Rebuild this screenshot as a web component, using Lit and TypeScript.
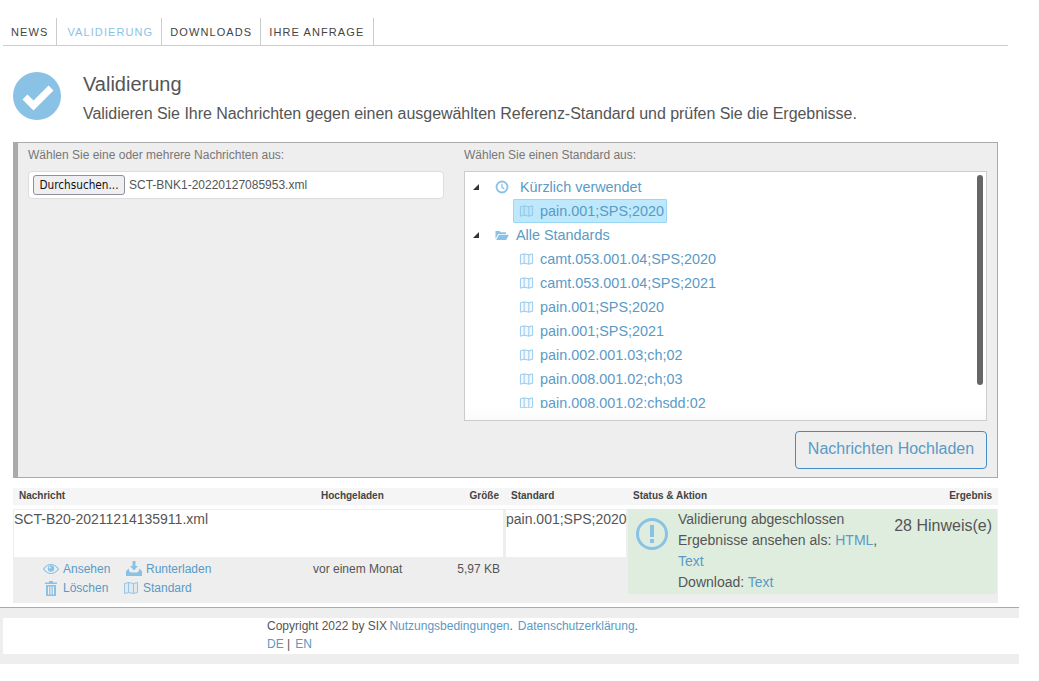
import { LitElement, html, css, svg } from 'lit';
import { customElement } from 'lit/decorators.js';

const mapIcon = svg`<path d="M1.500 2.500 5.500 1.500 10.500 2.500 14.500 1.500V11.500L10.500 12.500 5.500 11.500 1.500 12.500Z M5.500 1.500V11.500 M10.500 2.500V12.500" fill="currentColor" fill-opacity="0.12" stroke="currentColor" stroke-width="0.9"/>`;
const standards = [
  'camt.053.001.04;SPS;2020',
  'camt.053.001.04;SPS;2021',
  'pain.001;SPS;2020',
  'pain.001;SPS;2021',
  'pain.002.001.03;ch;02',
  'pain.008.001.02;ch;03',
  'pain.008.001.02:chsdd:02',
];

@customElement('app-root')
export class AppRoot extends LitElement {
  static styles = css`
    :host {
      display: block;
      font-family: 'Liberation Sans', Arial, sans-serif;
      color: #555;
      background: #fff;
      height: 681px;
      overflow: hidden;
    }
    a { color: #5a9ac5; text-decoration: none; }
    .nav {
      display: flex;
      margin: 0 0 0 3px;
      padding-top: 18px;
      width: 1005px;
      height: 27px;
      border-bottom: 1px solid #ccc;
      box-sizing: content-box;
    }
    .nav a {
      display: flex;
      align-items: center;
      padding: 0 8px;
      font-size: 11px;
      letter-spacing: 1.1px;
      color: #444;
      border-right: 1px solid #ccc;
      height: 27px;
    }
    .nav a.active { color: #8ac2e6; padding-left: 10px; }
    .nav a:last-child { padding-right: 9px; }
    .head {
      display: flex;
      margin: 26px 0 0 13px;
      height: 70px;
    }
    .badge { width: 48px; height: 48px; flex: none; }
    .head-text { margin-left: 22px; }
    h1 { margin: 0; font-size: 20px; font-weight: 400; line-height: 25px; }
    .head p { margin: 6px 0 0; font-size: 16px; line-height: 22px; letter-spacing: -0.04px; }
    .panel {
      margin-left: 13px;
      width: 985px;
      height: 336px;
      box-sizing: border-box;
      background: #eee;
      border: 1px solid #aaa;
      border-left-width: 5px;
      display: grid;
      grid-template-columns: 416px 523px;
      align-content: start;
      column-gap: 20px;
      padding: 5px 10px 0 10px;
      font-size: 12px;
      color: #777;
    }
    .label { line-height: 14px; margin: 0 0 9px; }
    .file {
      height: 28px;
      box-sizing: border-box;
      background: #fff;
      border: 1px solid #ddd;
      border-radius: 4px;
      display: flex;
      align-items: center;
      padding-left: 4px;
      color: #555;
    }
    .file span.btn {
      font-size: 11.7px;
      color: #111;
      font-family: 'DejaVu Sans Condensed', 'DejaVu Sans', sans-serif;
      background: #efeff2;
      border: 1px solid #8f8f9d;
      border-radius: 3px;
      height: 20px;
      line-height: 18px;
      width: 92px;
      box-sizing: border-box;
      text-align: center;
      margin-right: 4px;
    }
    .tree {
      position: relative;
      height: 250px;
      box-sizing: border-box;
      background: #fff;
      border: 1px solid #ccc;
      padding: 3px 0 12px;
      font-size: 14.4px;
    }
    .tree-scroll { height: 233px; overflow: hidden; }
    .tree::before {
      content: '';
      position: absolute;
      left: 0; right: 0; bottom: 0;
      height: 14px;
      background: linear-gradient(#fff0, #fafafa);
    }
    .bar {
      position: absolute;
      top: 3px;
      right: 3px;
      width: 6px;
      height: 210px;
      border-radius: 3px;
      background: #666;
    }
    .node {
      display: flex;
      align-items: center;
      height: 24px;
      color: #5a9ac5;
      white-space: nowrap;
    }
    .tri {
      width: 0;
      height: 0;
      margin: 0 0 0 8px;
      border-style: solid;
      border-width: 0 0 6px 6px;
      border-color: transparent transparent #333 transparent;
    }
    .node .top-icon { width: 14px; height: 14px; color: #8ac2e6; margin-left: 16px; flex: none; }
    .node .t { margin-left: 11px; }
    .node .t.near { margin-left: 7px; }
    .leaf {
      margin-left: 48px;
      padding: 0 2px 0 5px;
      gap: 6px;
      box-sizing: border-box;
      border: 1px solid transparent;
      width: fit-content;
    }
    .leaf svg { width: 15px; height: 14px; color: #8ac2e6; flex: none; }
    .leaf.sel { background: #bee9fc; border-color: #9ad8f5; border-radius: 1px; }
    .upload-row { grid-column: 2; display: flex; justify-content: flex-end; margin-top: 10px; }
    .upload {
      width: 192px;
      height: 38px;
      box-sizing: border-box;
      border: 1px solid #428bca;
      border-radius: 4px;
      color: #5a9ac5;
      font-size: 16px;
      padding-bottom: 2px;
      display: flex;
      align-items: center;
      justify-content: center;
    }
    .results { margin: 10px 0 0 13px; width: 985px; }
    .thead {
      display: grid;
      grid-template-columns: 308px 128px 56px 123px 1fr auto;
      height: 17px;
      line-height: 15px;
      background: #f5f5f5;
      font-size: 10px;
      font-weight: 700;
      color: #444;
    }
    .thead div:nth-child(1) { padding-left: 6px; }
    .thead div:nth-child(3) { text-align: right; padding-right: 6px; }
    .thead div:nth-child(4) { padding-left: 6px; }
    .thead div:nth-child(5) { padding-left: 5px; }
    .thead div:nth-child(6) { padding-right: 6px; }
    .tbody {
      margin-top: 4px;
      display: grid;
      grid-template-columns: 492px 123px 370px;
      grid-template-rows: 48px 46px;
      background: linear-gradient(#fff 48px, #eee 48px);
    }
    .cell {
      box-sizing: border-box;
      border: 1px solid #eee;
      border-bottom: 0;
      border-right-width: 2px;
      font-size: 14px;
      line-height: 18px;
      white-space: nowrap;
    }
    .meta {
      grid-column: 1 / 3;
      background: #eee;
      display: grid;
      grid-template-columns: 300px 97px 90px;
      font-size: 12px;
      color: #555;
      padding-top: 2px;
    }
    .actions {
      display: grid;
      grid-template-columns: 80px auto;
      grid-auto-rows: 19px;
      padding-left: 30px;
      justify-content: start;
    }
    .act { display: flex; align-items: center; gap: 4px; }
    .act svg { width: 16px; height: 16px; color: #8ac2e6; flex: none; }
    .act.down { margin-left: 3px; }
    .when, .size { padding-top: 3px; }
    .size { text-align: right; }
    .status-wrap { grid-column: 3; grid-row: 1 / 3; background: #eee; }
    .status {
      box-sizing: border-box;
      height: 85px;
      width: 369px;
      background: #dfeddf;
      display: flex;
      font-size: 14px;
      line-height: 21px;
    }
    .status svg { width: 34px; height: 34px; color: #8ac2e6; margin: 8px 0 0 7px; flex: none; }
    .status .msg { width: 204px; margin-left: 9px; flex: none; }
    .status .res { flex: 1; text-align: right; font-size: 16px; padding: 6px 5px 0 0; }
    .footer {
      margin-top: 4px;
      border-top: 1px solid #aaa;
      background: #eee;
      width: 1019px;
      padding: 10px 0;
    }
    .footer-in {
      margin-left: 3px;
      background: #fff;
      padding-left: 264px;
      height: 36px;
      font-size: 12px;
      line-height: 18px;
      overflow: hidden;
    }
    .footer-lines { margin-top: -1px; }
    .footer-lines .terms { margin-left: -1px; }
    .footer-lines .privacy { margin-left: 5px; }
    .footer-lines .en { margin-left: 5px; }
  `;

  render() {
    return html`
      <nav class="nav">
        <a href="#">NEWS</a>
        <a href="#" class="active">VALIDIERUNG</a>
        <a href="#">DOWNLOADS</a>
        <a href="#">IHRE ANFRAGE</a>
      </nav>

      <div class="head">
        <svg class="badge" viewBox="0 0 48 48">
          <circle cx="24" cy="24" r="24" fill="#8ac2e6"/>
          <path d="M12 25 L20.500 33.500 L38 16" fill="none" stroke="#fff" stroke-width="7"/>
        </svg>
        <div class="head-text">
          <h1>Validierung</h1>
          <p>Validieren Sie Ihre Nachrichten gegen einen ausgewählten Referenz-Standard und prüfen Sie die Ergebnisse.</p>
        </div>
      </div>

      <section class="panel">
        <div>
          <p class="label">Wählen Sie eine oder mehrere Nachrichten aus:</p>
          <div class="file"><span class="btn">Durchsuchen...</span>SCT-BNK1-20220127085953.xml</div>
        </div>
        <div>
          <p class="label">Wählen Sie einen Standard aus:</p>
          <div class="tree">
            <div class="tree-scroll">
              <div class="node">
                <span class="tri"></span>
                <svg class="top-icon" viewBox="0 0 14 14" fill="none" stroke="currentColor">
                  <circle cx="7" cy="7" r="5.500" stroke-width="1.800"/>
                  <path d="M7 3.800V7.300L9.400 9" stroke-width="1.300"/>
                </svg>
                <span class="t">Kürzlich verwendet</span>
              </div>
              <div class="node leaf sel">
                <svg viewBox="0 0 16 14">${mapIcon}</svg><span>pain.001;SPS;2020</span>
              </div>
              <div class="node">
                <span class="tri"></span>
                <svg class="top-icon" viewBox="0 0 14 14">
                  <path d="M.5 3H4.500L5.500 4.300H11V6H3.200L.5 11Z M3.800 6.800H13.800L11.200 12H1.200Z" fill="currentColor"/>
                </svg>
                <span class="t near">Alle Standards</span>
              </div>
              ${standards.map(
                s => html`<div class="node leaf"><svg viewBox="0 0 16 14">${mapIcon}</svg><span>${s}</span></div>`
              )}
            </div>
            <div class="bar"></div>
          </div>
        </div>
        <div class="upload-row"><a href="#" class="upload">Nachrichten Hochladen</a></div>
      </section>

      <section class="results">
        <div class="thead">
          <div>Nachricht</div>
          <div>Hochgeladen</div>
          <div>Größe</div>
          <div>Standard</div>
          <div>Status &amp; Aktion</div>
          <div>Ergebnis</div>
        </div>
        <div class="tbody">
          <div class="cell">SCT-B20-20211214135911.xml</div>
          <div class="cell">pain.001;SPS;2020</div>
          <div class="status-wrap">
            <div class="status">
              <svg viewBox="0 0 34 34">
                <circle cx="17" cy="17" r="14.500" fill="none" stroke="currentColor" stroke-width="3"/>
                <rect x="15" y="8" width="4" height="12" fill="currentColor"/>
                <rect x="15" y="22" width="4" height="4" fill="currentColor"/>
              </svg>
              <div class="msg">
                Validierung abgeschlossen<br />
                Ergebnisse ansehen als: <a href="#">HTML</a>, <a href="#">Text</a><br />
                Download: <a href="#">Text</a>
              </div>
              <div class="res">28 Hinweis(e)</div>
            </div>
          </div>
          <div class="meta">
            <div class="actions">
              <a href="#" class="act">
                <svg viewBox="0 0 16 16">
                  <path d="M.5 8C3 4.500 5.500 3.500 8 3.500S13 4.500 15.500 8C13 11.500 10.500 12.500 8 12.500S3 11.500 .5 8Z" fill="#eee" stroke="currentColor" stroke-width="1.200"/>
                  <circle cx="8" cy="7.500" r="3.200" fill="currentColor"/>
                  <circle cx="6.800" cy="6.500" r="1" fill="#eee"/>
                </svg>Ansehen
              </a>
              <a href="#" class="act down">
                <svg viewBox="0 0 16 16" fill="currentColor">
                  <path d="M6.500 0H9.500V5H12L8 9.500 4 5H6.500Z"/>
                  <path d="M0 10 3 7.500V10L5 11.500H11L13 10V7.500L16 10V15H0Z"/>
                </svg>Runterladen
              </a>
              <a href="#" class="act">
                <svg viewBox="0 0 16 16" fill="currentColor">
                  <path d="M2 2.500H6V1H10V2.500H14V4H2Z"/>
                  <path fill-rule="evenodd" d="M3 5H13V16H3Z M5 6.500V14.500H6.200V6.500Z M7.400 6.500V14.500H8.600V6.500Z M9.800 6.500V14.500H11V6.500Z"/>
                </svg>Löschen
              </a>
              <a href="#" class="act">
                <svg viewBox="0 0 16 14">${mapIcon}</svg>Standard
              </a>
            </div>
            <div class="when">vor einem Monat</div>
            <div class="size">5,97 KB</div>
          </div>
        </div>
      </section>

      <footer class="footer">
        <div class="footer-in">
          <div class="footer-lines">
            Copyright 2022 by SIX <a href="#" class="terms">Nutzungsbedingungen</a>.<a href="#" class="privacy">Datenschutzerklärung</a>.<br />
            <a href="#">DE</a> |<a href="#" class="en">EN</a>
          </div>
        </div>
      </footer>
    `;
  }
}
